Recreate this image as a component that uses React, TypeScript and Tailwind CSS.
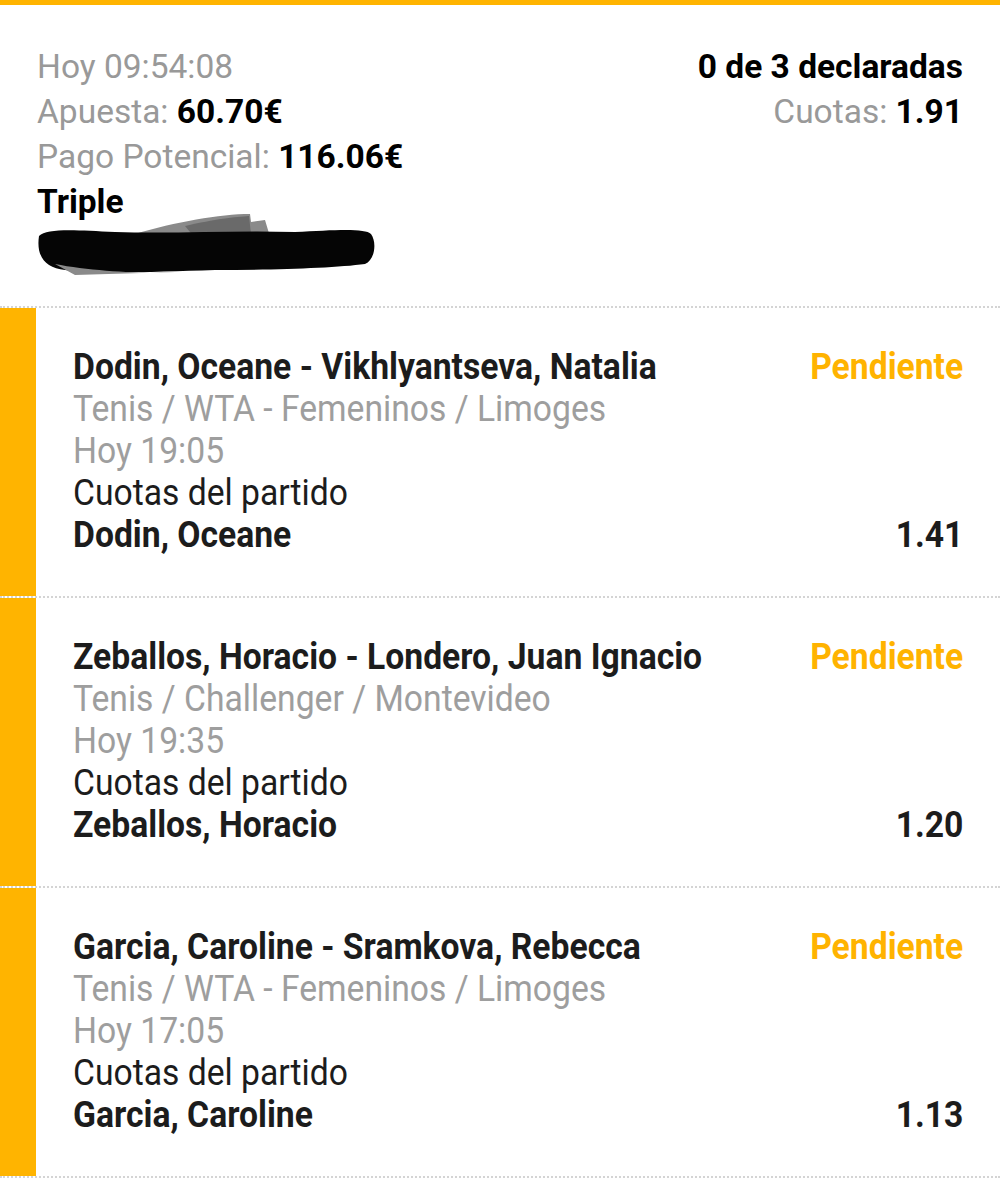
import React from "react";

interface Selection {
  match: string;
  league: string;
  time: string;
  pick: string;
  odds: string;
}

const selections: Selection[] = [
  {
    match: "Dodin, Oceane - Vikhlyantseva, Natalia",
    league: "Tenis / WTA - Femeninos / Limoges",
    time: "Hoy 19:05",
    pick: "Dodin, Oceane",
    odds: "1.41",
  },
  {
    match: "Zeballos, Horacio - Londero, Juan Ignacio",
    league: "Tenis / Challenger / Montevideo",
    time: "Hoy 19:35",
    pick: "Zeballos, Horacio",
    odds: "1.20",
  },
  {
    match: "Garcia, Caroline - Sramkova, Rebecca",
    league: "Tenis / WTA - Femeninos / Limoges",
    time: "Hoy 17:05",
    pick: "Garcia, Caroline",
    odds: "1.13",
  },
];

// tachón negro sobre el nombre de usuario
const Scribble = () => (
  <svg width="360" height="66" viewBox="0 0 360 66" className="block -ml-[2px]">
    <path
      d="M100 24 C140 12 185 4 215 4 L216 12 L230 10 L236 30 L110 34 Z"
      fill="#8a8a8a"
    />
    <path
      d="M150 16 C180 9 200 7 214 6 L216 24 L160 28 Z"
      fill="#6a6a6a"
    />
    <path
      d="M4 26 C12 18 40 20 80 22 C140 24 200 20 260 22 C300 20 330 18 336 24 C342 32 340 50 330 54 C300 58 240 60 180 60 C120 62 60 64 30 60 C10 58 1 46 4 26 Z"
      fill="#050505"
    />
    <path
      d="M20 54 C60 62 120 64 140 62 L40 65 Z"
      fill="#8a8a8a"
    />
  </svg>
);

const SelectionRow: React.FC<{ s: Selection }> = ({ s }) => (
  <div className="flex border-b-2 border-dotted border-[#d4d4d4]">
    <div className="w-9 shrink-0 bg-[#ffb400]" />
    <div className="flex-1 pl-[37px] pr-[37px] pt-[38px] pb-[40px] text-[37px] leading-[42px]">
      <div className="flex justify-between">
        <span className="inline-block whitespace-nowrap font-bold text-[#1c1c1c] origin-left scale-x-[0.91]">
          {s.match}
        </span>
        <span className="inline-block font-bold text-[#ffb300] origin-right scale-x-[0.91]">
          Pendiente
        </span>
      </div>
      <div className="whitespace-nowrap text-[#9e9e9e]">
        <span className="inline-block origin-left scale-x-[0.91]">{s.league}</span>
      </div>
      <div className="text-[#9e9e9e]">
        <span className="inline-block origin-left scale-x-[0.91]">{s.time}</span>
      </div>
      <div className="text-[#1c1c1c]">
        <span className="inline-block origin-left scale-x-[0.91]">Cuotas del partido</span>
      </div>
      <div className="flex justify-between font-bold text-[#1c1c1c]">
        <span className="inline-block origin-left scale-x-[0.91]">{s.pick}</span>
        <span className="inline-block origin-right scale-x-[0.91]">{s.odds}</span>
      </div>
    </div>
  </div>
);

export default function App() {
  return (
    <div className="w-[1000px] min-h-[1200px] bg-white font-['Roboto',sans-serif]">
      <div className="h-[5px] bg-[#ffb400]" />
      <div className="border-b-2 border-dotted border-[#d4d4d4] pl-[37px] pr-[37px] pt-[39px] pb-[30px]">
        <div className="flex justify-between text-[33.5px] leading-[45px]">
          <div>
            <div className="text-[#999999]">Hoy 09:54:08</div>
            <div className="text-[#999999]">
              Apuesta: <span className="font-bold text-black">60.70€</span>
            </div>
            <div className="text-[#999999]">
              Pago Potencial: <span className="font-bold text-black">116.06€</span>
            </div>
            <div className="font-bold text-black">Triple</div>
          </div>
          <div className="text-right">
            <div className="font-bold text-black">0 de 3 declaradas</div>
            <div className="text-[#999999]">
              Cuotas: <span className="font-bold text-black">1.91</span>
            </div>
          </div>
        </div>
        <div className="-mt-[14px]">
          <Scribble />
        </div>
      </div>
      {selections.map((s, i) => (
        <SelectionRow key={i} s={s} />
      ))}
    </div>
  );
}
